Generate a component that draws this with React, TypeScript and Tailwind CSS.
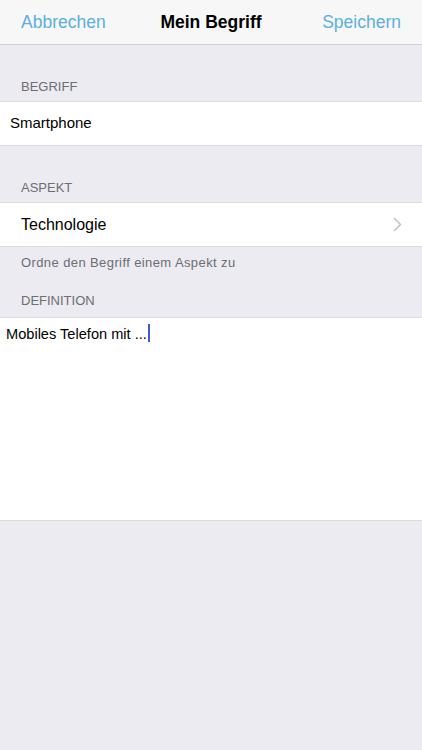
import React from "react";

const font = { fontFamily: '"Liberation Sans", Arial, sans-serif' };

function SectionLabel({ children, className = "" }: { children: React.ReactNode; className?: string }) {
  return (
    <div className={`flex items-end px-[21px] text-[13px] leading-[16px] text-[#6d6d72] ${className}`}>
      {children}
    </div>
  );
}

export default function App() {
  return (
    <div className="min-h-[750px] w-full bg-[#ebebf1]" style={font}>
      {/* Navigation bar */}
      <div className="flex h-[45px] items-center border-b border-[#cfcfd3] bg-[#f7f7f7] px-[21px] text-[17.5px] leading-[20px]">
        <span className="flex-1 text-[#5ab0dc]">Abbrechen</span>
        <span className="font-bold text-black">Mein Begriff</span>
        <span className="flex-1 text-right text-[#5ab0dc]">Speichern</span>
      </div>

      {/* Begriff */}
      <SectionLabel className="h-[56px] pb-[6px]">BEGRIFF</SectionLabel>
      <div className="flex h-[45px] items-center border-y border-[#dcdce0] bg-white px-[10px] text-[15px] text-black">
        Smartphone
      </div>

      {/* Aspekt */}
      <SectionLabel className="h-[56px] pb-[6px]">ASPEKT</SectionLabel>
      <div className="flex h-[45px] items-center justify-between border-y border-[#dcdce0] bg-white pl-[21px] pr-[20px] text-[16px] text-black">
        <span>Technologie</span>
        <svg width="9" height="15" viewBox="0 0 9 15" fill="none">
          <path d="M1.5 1.5L7.5 7.5L1.5 13.5" stroke="#c4c4c8" strokeWidth="1.6" strokeLinecap="round" strokeLinejoin="round" />
        </svg>
      </div>
      <div className="px-[21px] pt-[8px] pb-[8px] text-[13px] leading-[16px] tracking-[0.4px] text-[#6d6d72]">
        Ordne den Begriff einem Aspekt zu
      </div>

      {/* Definition */}
      <SectionLabel className="h-[38px] pb-[8px]">DEFINITION</SectionLabel>
      <div className="h-[204px] border-y border-[#dcdce0] bg-white px-[6px] pt-[3px] text-[14.6px] leading-[18px] text-black">
        <span>Mobiles Telefon mit ...</span>
        <span className="ml-[1px] inline-block h-[18px] w-[2px] translate-y-[3px] bg-[#3b5bdb] align-baseline" />
      </div>
    </div>
  );
}
